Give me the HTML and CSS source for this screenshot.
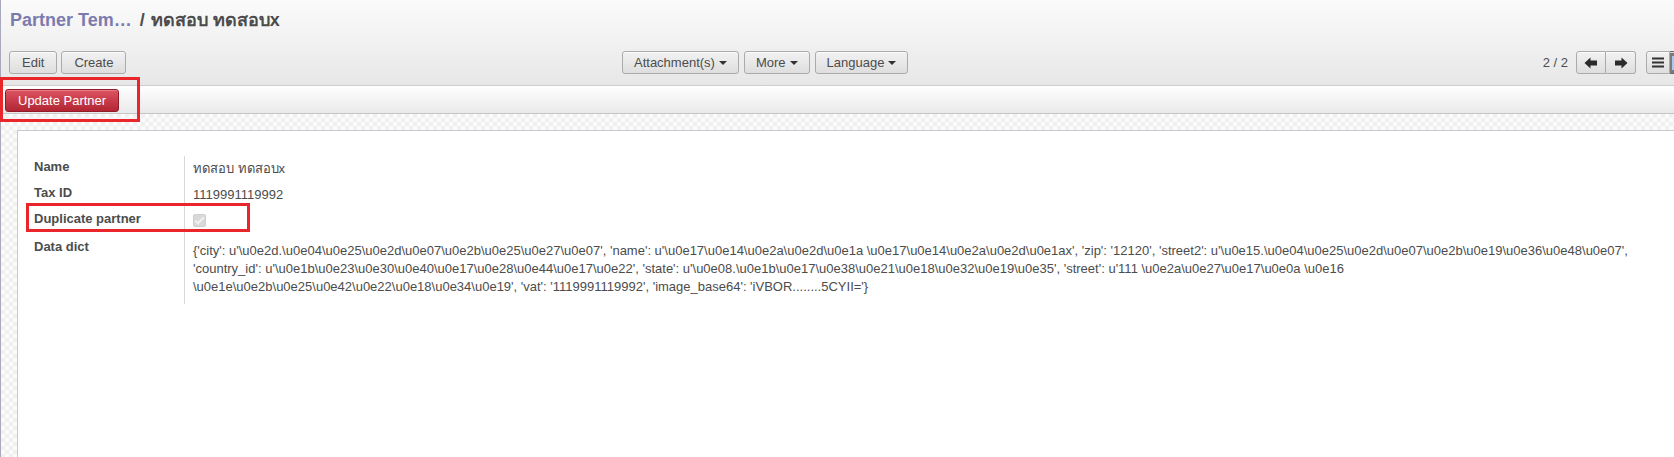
FILE: index.html
```html
<!DOCTYPE html>
<html>
<head>
<meta charset="utf-8">
<title>Partner Template</title>
<link rel="stylesheet" href="styles.css">
</head>
<body>
<div class="app">
  <header class="vm-header">
    <div class="breadcrumb">
      <a class="crumb-link">Partner Tem…</a>
      <span class="crumb-sep">/</span>
      <span class="crumb-current">ทดสอบ ทดสอบx</span>
    </div>
    <div class="toolbar">
      <div class="tb-left">
        <button class="btn btn-wide">Edit</button>
        <button class="btn btn-wide">Create</button>
      </div>
      <div class="tb-center">
        <button class="btn">Attachment(s) <span class="caret"></span></button>
        <button class="btn">More <span class="caret"></span></button>
        <button class="btn">Language <span class="caret"></span></button>
      </div>
      <div class="tb-right">
        <span class="pager-count">2 / 2</span>
        <div class="btn-group pager">
          <button class="btn icon-btn"><svg width="14" height="12" viewBox="0 0 14 12"><path d="M0.5 6 L6.5 0.5 L6.5 3.5 L13 3.5 L13 8.5 L6.5 8.5 L6.5 11.5 Z" fill="#2b2b2b"/></svg></button>
          <button class="btn icon-btn"><svg width="14" height="12" viewBox="0 0 14 12"><path d="M13.5 6 L7.5 0.5 L7.5 3.5 L1 3.5 L1 8.5 L7.5 8.5 L7.5 11.5 Z" fill="#2b2b2b"/></svg></button>
        </div>
        <div class="btn-group switcher">
          <button class="btn icon-btn"><svg width="12" height="11" viewBox="0 0 12 11"><rect x="0" y="0.5" width="12" height="2" fill="#333"/><rect x="0" y="4.5" width="12" height="2" fill="#333"/><rect x="0" y="8.5" width="12" height="2" fill="#333"/></svg></button>
          <button class="btn icon-btn active"><span class="form-icon"></span></button>
        </div>
      </div>
    </div>
  </header>

  <div class="statusbar">
    <button class="btn btn-primary">Update Partner</button>
  </div>

  <div class="form-bg">
    <div class="sheet">
      <div class="group">
        <div class="row">
          <div class="label">Name</div>
          <div class="value">ทดสอบ ทดสอบx</div>
        </div>
        <div class="row">
          <div class="label">Tax ID</div>
          <div class="value">1119991119992</div>
        </div>
        <div class="row row-check">
          <div class="label">Duplicate partner</div>
          <div class="value"><span class="checkbox"><svg width="11" height="9" viewBox="0 0 11 9"><path d="M1.2 4.6 L4 7.3 L9.8 1.4" fill="none" stroke="#f2f2f2" stroke-width="2"/></svg></span></div>
        </div>
        <div class="row row-data">
          <div class="label">Data dict</div>
          <div class="value data">{'city': u'\u0e2d.\u0e04\u0e25\u0e2d\u0e07\u0e2b\u0e25\u0e27\u0e07', 'name': u'\u0e17\u0e14\u0e2a\u0e2d\u0e1a \u0e17\u0e14\u0e2a\u0e2d\u0e1ax', 'zip': '12120', 'street2': u'\u0e15.\u0e04\u0e25\u0e2d\u0e07\u0e2b\u0e19\u0e36\u0e48\u0e07',<br>'country_id': u'\u0e1b\u0e23\u0e30\u0e40\u0e17\u0e28\u0e44\u0e17\u0e22', 'state': u'\u0e08.\u0e1b\u0e17\u0e38\u0e21\u0e18\u0e32\u0e19\u0e35', 'street': u'111 \u0e2a\u0e27\u0e17\u0e0a \u0e16<br>\u0e1e\u0e2b\u0e25\u0e42\u0e22\u0e18\u0e34\u0e19', 'vat': '1119991119992', 'image_base64': 'iVBOR........5CYII='}</div>
        </div>
      </div>
    </div>
  </div>

  <div class="mark mark-button"></div>
  <div class="mark mark-field"></div>
</div>
</body>
</html>
```

FILE: styles.css
```css
* { box-sizing: border-box; }

html, body {
  margin: 0;
  padding: 0;
  height: 100%;
  overflow: hidden;
}

body {
  font-family: "Liberation Sans", Arial, sans-serif;
  font-size: 13px;
  color: #4c4c4c;
  background: #fff;
}

.app {
  position: relative;
  min-height: 100vh;
  display: flex;
  flex-direction: column;
  border-left: 1px solid #a9a9bb;
}

/* ---------- header ---------- */
.vm-header {
  height: 86px;
  padding: 8px 0 10px 0;
  background: linear-gradient(#fbfbfb, #e7e7e7);
  border-bottom: 1px solid #cdcdcd;
}

.breadcrumb {
  height: 24px;
  line-height: 24px;
  padding-left: 9px;
  font-size: 18px;
  font-weight: bold;
  white-space: nowrap;
}

.crumb-link { color: #7c7bad; }
.crumb-sep { color: #4c4c4c; margin-left: 3px; }
.crumb-current { color: #4c4c4c; margin-left: 1px; }

.toolbar {
  display: flex;
  align-items: center;
  margin-top: 19px;
  padding-left: 8px;
  margin-right: -20px;
}

.tb-left {
  display: flex;
  gap: 4px;
  width: 613px;
}

.tb-center {
  display: flex;
  gap: 5px;
}

.tb-right {
  margin-left: auto;
  display: flex;
  align-items: center;
}

.btn {
  font-family: "Liberation Sans", Arial, sans-serif;
  font-size: 13px;
  color: #4c4c4c;
  height: 23px;
  padding: 0 11px;
  border: 1px solid #ababab;
  border-radius: 3px;
  background: linear-gradient(#f2f2f2, #dedede);
  box-shadow: inset 0 1px 0 rgba(255,255,255,0.7);
  display: inline-flex;
  align-items: center;
  gap: 4px;
  cursor: pointer;
}

.btn-wide {
  padding: 0 12px;
}

.caret {
  width: 0;
  height: 0;
  border-left: 4px solid transparent;
  border-right: 4px solid transparent;
  border-top: 4px solid #333;
}

.pager-count {
  margin-right: 8px;
  font-size: 13px;
  color: #4c4c4c;
}

.btn-group {
  display: flex;
}

.btn-group .btn {
  border-radius: 0;
}
.btn-group .btn:first-child {
  border-radius: 3px 0 0 3px;
}
.btn-group .btn:last-child {
  border-radius: 0 3px 3px 0;
  border-left: none;
}

.icon-btn {
  width: 30px;
  padding: 0;
  justify-content: center;
}

.switcher {
  margin-left: 10px;
}
.switcher .icon-btn {
  width: 24px;
}
.switcher .active {
  background: #7b7b7b;
  border-color: #6a6a6a;
  justify-content: flex-start;
  padding-left: 2px;
}
.form-icon {
  width: 12px;
  height: 14px;
  background: #a9c9ec;
}

/* ---------- status bar ---------- */
.statusbar {
  height: 28px;
  padding: 3px 5px 0 4px;
  background: linear-gradient(#ffffff, #e9e9e9);
  border-bottom: 1px solid #c6c6c6;
}

.btn-primary {
  color: #fff;
  background: linear-gradient(#dc5361, #b32533);
  border: 1px solid #8f1c28;
  padding: 0 12px;
  box-shadow: inset 0 1px 0 rgba(255,255,255,0.25);
}

/* ---------- form ---------- */
.form-bg {
  flex: 1;
  display: flex;
  padding: 16px 0 0 16px;
  background-color: #fbfbfb;
  background-image:
    linear-gradient(45deg, #f0f0f0 25%, transparent 25%, transparent 75%, #f0f0f0 75%),
    linear-gradient(45deg, #f0f0f0 25%, transparent 25%, transparent 75%, #f0f0f0 75%);
  background-size: 8px 8px;
  background-position: 0 0, 4px 4px;
}

.sheet {
  flex: 1;
  background: #fff;
  border-left: 1px solid #c9c9d3;
  border-top: 1px solid #c9c9d3;
  padding: 25px 0 0 16px;
}

.group {
  display: flex;
  flex-direction: column;
}

.row {
  display: grid;
  grid-template-columns: 150px 1470px;
  min-height: 26px;
}

.row-check { min-height: 28px; }

.label {
  font-weight: bold;
  line-height: 18px;
  padding-top: 2px;
  color: #4c4c4c;
}

.value {
  border-left: 1px solid #d8d8d8;
  padding-left: 8px;
  padding-top: 4px;
  line-height: 18px;
  color: #4c4c4c;
}

.row-data .value {
  padding-top: 6px;
  padding-bottom: 8px;
}

.data {
  font-family: "Liberation Sans Narrow", "Arial Narrow", "Liberation Sans", Arial, sans-serif;
  font-size: 13px;
}

.checkbox {
  display: inline-flex;
  align-items: center;
  justify-content: center;
  width: 13px;
  height: 13px;
  margin-top: 1px;
  border-radius: 2px;
  background: #d9d9d9;
  border: 1px solid #cfcfcf;
}

/* ---------- annotation marks ---------- */
.mark {
  position: absolute;
  border: 3px solid #e8262b;
  pointer-events: none;
}

.mark-button {
  left: -1px;
  top: 77px;
  width: 140px;
  height: 45px;
}

.mark-field {
  left: 25px;
  top: 203px;
  width: 224px;
  height: 29px;
}
```
